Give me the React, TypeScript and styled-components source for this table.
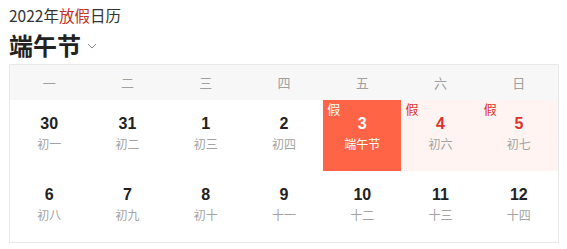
import React from 'react';
import styled, { createGlobalStyle } from 'styled-components';

const GlobalStyle = createGlobalStyle`
  body {
    margin: 0;
    background: #ffffff;
    font-family: 'Liberation Sans', 'Noto Sans CJK SC', sans-serif;
  }
`;

const Page = styled.div`
  padding: 4px 9px 0 9px;
  width: 550px;
`;

const Subtitle = styled.div`
  font-family: 'Noto Sans CJK SC', sans-serif;
  font-size: 15.5px;
  line-height: 22px;
  color: #333333;
  em {
    font-style: normal;
    color: #c0302c;
  }
`;

const TitleRow = styled.div`
  display: flex;
  align-items: center;
  gap: 6px;
  height: 38px;
`;

const Title = styled.h1`
  margin: 0;
  font-family: 'Noto Sans CJK SC', sans-serif;
  font-size: 24px;
  font-weight: 700;
  line-height: 32px;
  color: #222222;
`;

const Calendar = styled.div`
  border: 1px solid #e8e8e8;
`;

const Grid = styled.div`
  display: grid;
  grid-template-columns: repeat(7, 1fr);
`;

const WeekHead = styled.div`
  height: 35px;
  display: flex;
  align-items: center;
  justify-content: center;
  background: #f7f7f7;
  font-family: 'Noto Sans CJK SC', sans-serif;
  font-size: 13px;
  color: #a0a0a0;
`;

const Cell = styled.div<{ $kind?: 'today' | 'off' }>`
  position: relative;
  height: 71px;
  box-sizing: border-box;
  padding-top: 14px;
  display: flex;
  flex-direction: column;
  align-items: center;
  background: ${(p) =>
    p.$kind === 'today' ? '#ff6446' : p.$kind === 'off' ? '#fff4f2' : '#ffffff'};
  color: ${(p) =>
    p.$kind === 'today' ? '#ffffff' : p.$kind === 'off' ? '#dc322c' : '#222222'};
`;

const DayNum = styled.div`
  font-family: 'Liberation Sans', sans-serif;
  font-size: 16px;
  font-weight: 700;
  line-height: 20px;
`;

const Lunar = styled.div<{ $light?: boolean }>`
  font-family: 'Noto Sans CJK SC', sans-serif;
  font-size: 12px;
  line-height: 20px;
  color: ${(p) => (p.$light ? '#ffffff' : '#a3a3a3')};
`;

const Tag = styled.span<{ $light?: boolean }>`
  position: absolute;
  top: 1px;
  left: 4px;
  font-family: 'Noto Sans CJK SC', sans-serif;
  font-size: 13px;
  line-height: 16px;
  color: ${(p) => (p.$light ? '#ffffff' : '#dc322c')};
`;

const weekDays = ['一', '二', '三', '四', '五', '六', '日'];

interface Day {
  num: number;
  lunar: string;
  kind?: 'today' | 'off';
}

const days: Day[] = [
  { num: 30, lunar: '初一' },
  { num: 31, lunar: '初二' },
  { num: 1, lunar: '初三' },
  { num: 2, lunar: '初四' },
  { num: 3, lunar: '端午节', kind: 'today' },
  { num: 4, lunar: '初六', kind: 'off' },
  { num: 5, lunar: '初七', kind: 'off' },
  { num: 6, lunar: '初八' },
  { num: 7, lunar: '初九' },
  { num: 8, lunar: '初十' },
  { num: 9, lunar: '十一' },
  { num: 10, lunar: '十二' },
  { num: 11, lunar: '十三' },
  { num: 12, lunar: '十四' },
];

function Chevron() {
  return (
    <svg width="10" height="6" viewBox="0 0 10 6" style={{ marginTop: 2 }}>
      <path d="M1 1 L5 5 L9 1" fill="none" stroke="#888888" strokeWidth="1" />
    </svg>
  );
}

export default function App() {
  return (
    <Page>
      <GlobalStyle />
      <Subtitle>
        2022年<em>放假</em>日历
      </Subtitle>
      <TitleRow>
        <Title>端午节</Title>
        <Chevron />
      </TitleRow>
      <Calendar>
        <Grid>
          {weekDays.map((w) => (
            <WeekHead key={w}>{w}</WeekHead>
          ))}
          {days.map((d) => (
            <Cell key={d.num} $kind={d.kind}>
              {d.kind && <Tag $light={d.kind === 'today'}>假</Tag>}
              <DayNum>{d.num}</DayNum>
              <Lunar $light={d.kind === 'today'}>{d.lunar}</Lunar>
            </Cell>
          ))}
        </Grid>
      </Calendar>
    </Page>
  );
}
